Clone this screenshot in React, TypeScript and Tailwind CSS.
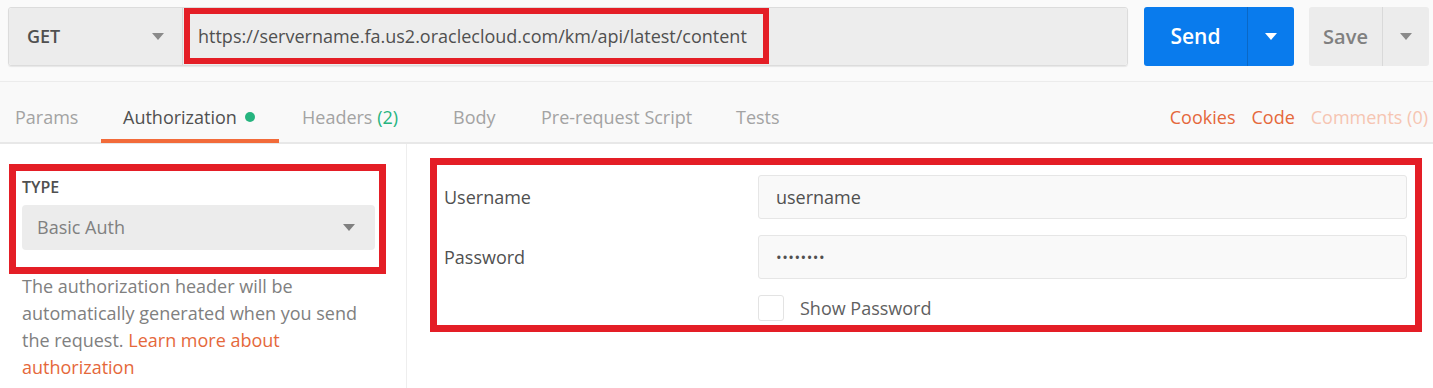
import React from "react";

const font = { fontFamily: '"Open Sans", "Noto Sans", sans-serif' };

// small filled caret used by the dropdowns
const Caret = ({ className }: { className: string }) => (
    <svg width="12" height="7" viewBox="0 0 12 7" className={className}>
        <path d="M0 0h12L6 7z" fill="currentColor" />
    </svg>
);

const tabs = [
    { label: "Params", w: "w-[101px]", pl: "pl-[15px]" },
    { label: "Authorization", w: "w-[178px]", pl: "pl-[22px]", active: true },
    { label: "Headers", w: "w-[152px]", pl: "pl-[23px]", count: "(2)" },
    { label: "Body", w: "w-[88px]", pl: "pl-[22px]" },
    { label: "Pre-request Script", w: "w-[195px]", pl: "pl-[22px]" },
    { label: "Tests", w: "w-[86px]", pl: "pl-[22px]" },
];

const App: React.FC = () => {
    return (
        <div className="w-[1433px] h-[388px] overflow-hidden bg-white" style={font}>
            {/* request bar */}
            <div className="h-[82px] bg-[#fafafa] border-b border-[#ececec] flex items-start pt-[7px] pl-[8px]">
                <div className="relative flex w-[1120px] h-[59px] rounded-[3px] border border-[#dcdcdc] shadow-[0_1px_1px_rgba(0,0,0,0.08)]">
                    <div className="w-[174px] flex items-center justify-between pl-[18px] pr-[18px] bg-[#ececec] border-r border-[#d6d6d6] rounded-l-[3px]">
                        <span className="text-[18px] font-semibold text-[#505050]">GET</span>
                        <Caret className="text-[#8a8a8a]" />
                    </div>
                    <div className="flex-1 flex items-center pl-[15px] bg-[#ededed] rounded-r-[3px]">
                        <span className="text-[18px] text-[#505050]">
                            https://servername.fa.us2.oraclecloud.com/km/api/latest/content
                        </span>
                    </div>
                    <div className="absolute left-[175px] top-[0px] w-[585px] h-[56px] border-[6px] border-[#e41e26]" />
                </div>
                <div className="ml-[16px] flex h-[59px] w-[150px] rounded-[3px] bg-[#097bed]">
                    <div className="w-[104px] flex items-center justify-center border-r border-[#0a68c6]">
                        <span className="text-[21px] font-semibold text-white">Send</span>
                    </div>
                    <div className="flex-1 flex items-center justify-center">
                        <Caret className="text-white" />
                    </div>
                </div>
                <div className="ml-[15px] flex h-[59px] w-[120px] rounded-[3px] bg-[#ececec]">
                    <div className="w-[74px] flex items-center justify-center border-r border-[#d9d9d9]">
                        <span className="text-[20px] font-semibold text-[#808080]">Save</span>
                    </div>
                    <div className="flex-1 flex items-center justify-center">
                        <Caret className="text-[#8a8a8a]" />
                    </div>
                </div>
            </div>

            {/* tabs */}
            <div className="h-[62px] bg-[#f9f9f9] border-b-2 border-[#e8e8e8] flex items-stretch">
                {tabs.map((t) => (
                    <div key={t.label} className={`${t.w} ${t.pl} relative flex items-center pt-[10px]`}>
                        <span className={`text-[18px] ${t.active ? "text-[#505050]" : "text-[#a3a3a3]"}`}>
                            {t.label}
                            {t.count && <span className="text-[#26b47f]"> {t.count}</span>}
                        </span>
                        {t.active && <span className="ml-[8px] w-[10px] h-[10px] rounded-full bg-[#26b47f]" />}
                        {t.active && <div className="absolute left-0 right-0 bottom-[-1px] h-[4px] bg-[#f26b3a]" />}
                    </div>
                ))}
                <div className="ml-auto flex items-center gap-[16px] pr-[5px] pt-[10px] text-[18px]">
                    <span className="text-[#e5683b]">Cookies</span>
                    <span className="text-[#e5683b]">Code</span>
                    <span className="text-[#f6c5b2]">Comments (0)</span>
                </div>
            </div>

            {/* auth body */}
            <div className="relative flex h-[244px]">
                <div className="w-[407px] shrink-0 border-r border-[#eeeeee] pl-[22px] pr-[31px] pt-[33px]">
                    <div className="text-[16px] leading-[20px] font-semibold text-[#505050]">TYPE</div>
                    <div className="mt-[8px] h-[45px] rounded-[4px] bg-[#ececec] flex items-center justify-between pl-[15px] pr-[20px]">
                        <span className="text-[18px] text-[#808080]">Basic Auth</span>
                        <Caret className="text-[#808080]" />
                    </div>
                    <p className="mt-[23px] text-[18px] leading-[27px] text-[#808080]">
                        The authorization header will be automatically generated when you send the request.{" "}
                        <span className="text-[#e5683b]">Learn more about authorization</span>
                    </p>
                </div>
                <div className="flex-1 pl-[37px] pr-[26px] pt-[31px] flex flex-col gap-[16px]">
                    <div className="flex items-center h-[44px]">
                        <span className="w-[314px] text-[18px] text-[#505050]">Username</span>
                        <div className="flex-1 h-[44px] rounded-[3px] border border-[#e6e6e6] bg-[#f9f9f9] flex items-center pl-[17px]">
                            <span className="text-[18px] text-[#505050]">username</span>
                        </div>
                    </div>
                    <div className="flex items-center h-[44px]">
                        <span className="w-[314px] text-[18px] text-[#505050]">Password</span>
                        <div className="flex-1 h-[44px] rounded-[3px] border border-[#e6e6e6] bg-[#f9f9f9] flex items-center pl-[17px]">
                            <span className="text-[15px] tracking-[0.5px] text-[#505050]">••••••••</span>
                        </div>
                    </div>
                    <div className="flex items-center h-[26px] pl-[314px]">
                        <span className="w-[26px] h-[26px] rounded-[3px] border border-[#e3e3e3] bg-white" />
                        <span className="ml-[16px] text-[18px] text-[#606060]">Show Password</span>
                    </div>
                </div>

                {/* red annotation boxes */}
                <div className="absolute left-[9px] top-[20px] w-[377px] h-[110px] border-[7px] border-[#e41e26]" />
                <div className="absolute left-[430px] top-[14px] w-[992px] h-[174px] border-[7px] border-[#e41e26]" />
            </div>
        </div>
    );
};

export default App;
